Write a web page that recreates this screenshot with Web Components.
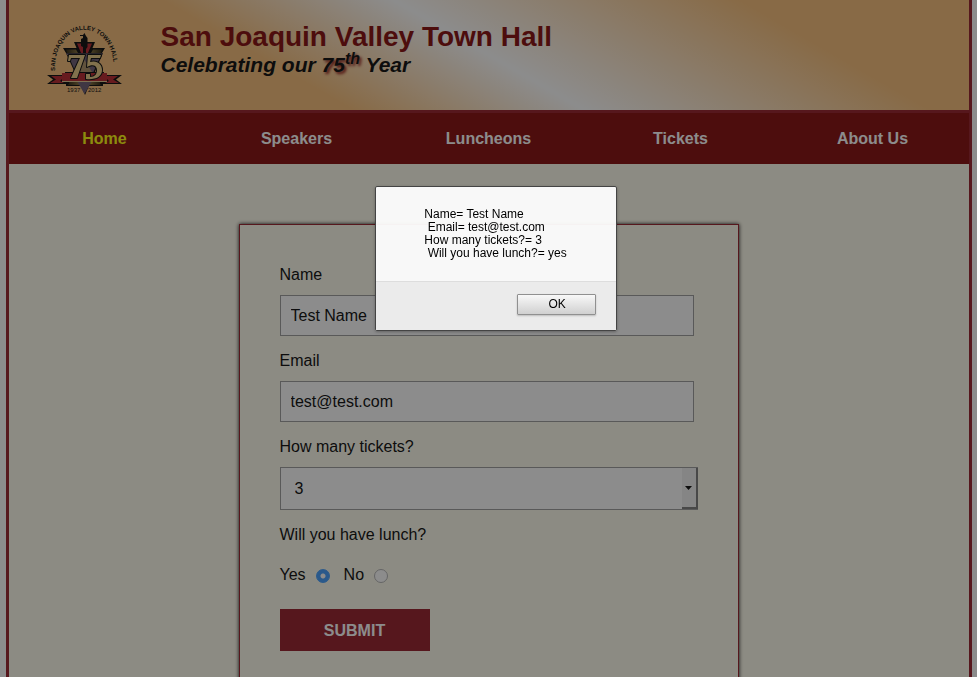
<!DOCTYPE html>
<html lang="en">
<head>
<meta charset="utf-8">
<title>San Joaquin Valley Town Hall</title>
<style>
  body { margin: 0; background: #fff; color: #000; font: 16px/20px "Liberation Sans", Arial, sans-serif; overflow: hidden; }
</style>
</head>
<body>
<town-page>
  <town-header slot="header"></town-header>
  <town-nav slot="nav"></town-nav>
  <ticket-form></ticket-form>
</town-page>
<alert-dialog>Name= Test Name
 Email= test@test.com
How many tickets?= 3
 Will you have lunch?= yes</alert-dialog>

<script>
function define(name, html) {
  const template = document.createElement('template');
  template.innerHTML = html;
  customElements.define(name, class extends HTMLElement {
    constructor() {
      super();
      this.attachShadow({ mode: 'open' }).append(template.content.cloneNode(true));
    }
    connectedCallback() {
      const root = this.shadowRoot;
      root.querySelectorAll('[data-text]').forEach(el => { el.textContent = this.getAttribute(el.dataset.text); });
      const input = root.querySelector('input.text');
      if (input) {
        input.type = this.getAttribute('type') || 'text';
        input.value = this.getAttribute('value') || '';
      }
      const ok = root.querySelector('button.ok');
      if (ok) ok.addEventListener('click', () => this.remove());
    }
  });
}

define('town-page', `
<style>
  :host { display: block; max-width: 960px; margin: 0 auto; border: solid #931420; border-width: 0 3px; background: #fffded; }
  main { padding-top: 60px; }
</style>
<slot name="header"></slot>
<slot name="nav"></slot>
<main><slot></slot></main>`);

define('town-logo', `
<style>
  :host { display: block; flex: none; width: 90px; height: 90px; }
  svg { display: block; width: 100%; height: 100%; }
  text { font-family: "Liberation Sans Narrow", "Liberation Sans", sans-serif; }
</style>
<svg viewBox="0 0 90 90" role="img" aria-label="San Joaquin Valley Town Hall 75th anniversary">
  <defs>
    <path id="arc" d="M15 56 C14 1 75 1 74 56"/>
    <linearGradient id="gold"><stop offset="0" stop-color="#241b06"/><stop offset=".5" stop-color="#a98c45"/><stop offset="1" stop-color="#241b06"/></linearGradient>
  </defs>
  <text font-size="6" font-weight="bold"><textPath href="#arc">SAN JOAQUIN VALLEY TOWN HALL</textPath></text>
  <path d="M34 27 H55 L44.500 52Z" fill="#000"/>
  <path d="M37 28.500 H52 L44.500 46Z" fill="#b51c24"/>
  <path d="M43 20 L44.500 18 L46 21 L47.500 23 V32 L46 34 V38 H43 V32 L41 31 V24 L43 23Z M40 20 H43 V21 H40Z" fill="#000"/>
  <path d="M23 33 H37 L42 42 H47 L52 33 H65 L62 38 H26Z" fill="#000"/>
  <path d="M26 34.500 H36 L38 38 H27Z M53 34.500 H62 L61 38 H51Z" fill="url(#gold)"/>
  <path d="M26 38 H63 L45 80Z" fill="#000"/>
  <path d="M28 40 H61 L44.500 77Z" fill="#67546d"/>
  <path d="M37 57 L44.500 45 L52 57Z" fill="#a88c60"/>
  <path d="M26 38.500 H63 L62 40 H27Z" fill="#67546d"/>
  <path d="M26 64 H63 V71 H26Z" fill="#000"/>
  <path d="M28 66 H61 V70 H28Z" fill="url(#gold)"/>
  <path d="M37 66 H52 L44.500 79Z" fill="#67546d"/>
  <path d="M7 60 H25 V57 H64 V60 H82 L76 64.500 L82 69 H60 V67 H29 V69 H7 L13 64.500Z" fill="#000"/>
  <path d="M11 61 H25 L20 66 L24 68 H10 L16 64.500Z M78 61 H64 L69 66 L65 68 H79 L73 64.500Z" fill="#b51c24"/>
  <path d="M22 58 H67 V66 H22Z" fill="#b51c24"/>
  <path d="M22 66.500 H67" stroke="#e2c78c" fill="none"/>
  <g fill="#e8c880" stroke="#000" stroke-width="2" paint-order="stroke" stroke-linejoin="round">
    <path d="M28 46 L29 40 H45 L37 63 H31 L40 43 H31 L30 46Z"/>
    <path d="M48 40 H61 L60 43 H51 L50 47 C57 45 62 49 62 55 C62 62 55 65 46 64 V59 H50 V62 C55 62 57 59 57 55 C57 50 52 49 47 52Z"/>
  </g>
  <text x="27" y="77" font-size="6">1937</text>
  <text x="48" y="77" font-size="6">2012</text>
</svg>`);

define('town-header', `
<style>
  :host { display: block; border-bottom: 3px solid #931420; background: linear-gradient(30deg, #f6bb73 0%, #f6bb73 30%, #fff 50%, #f6bb73 80%, #f6bb73 100%); }
  header { display: flex; gap: 31px; padding: 15px 31px 5px; }
  .titles { padding-top: 5px; }
  h1, h2 { margin: 0; }
  h1 { font-size: 28px; line-height: 33px; color: #800000; }
  h2 { font-size: 21px; line-height: 24px; font-style: italic; }
  .shadow { text-shadow: 2px 2px 3px #800000; }
  sup { font-size: 16px; line-height: 0; }
</style>
<header>
  <town-logo></town-logo>
  <div class="titles">
    <h1>San Joaquin Valley Town Hall</h1>
    <h2>Celebrating our <span class="shadow">75<sup>th</sup></span> Year</h2>
  </div>
</header>`);

define('town-nav', `
<style>
  :host { display: block; background: #800000; }
  ul { display: grid; grid-template-columns: repeat(5, 1fr); margin: 0; padding: 0; list-style: none; }
  a { display: block; padding: 16px 0; line-height: 19px; text-align: center; font-weight: bold; color: #fff; text-decoration: none; }
  a[aria-current] { color: #ff0; }
</style>
<nav><ul>
  <li><a href="#home" aria-current="page">Home</a></li>
  <li><a href="#speakers">Speakers</a></li>
  <li><a href="#luncheons">Luncheons</a></li>
  <li><a href="#tickets">Tickets</a></li>
  <li><a href="#about">About Us</a></li>
</ul></nav>`);

define('text-field', `
<style>
  :host { display: block; margin-bottom: 15px; }
  label { display: block; margin-bottom: 10px; }
  input { display: block; box-sizing: border-box; width: calc(100% - 4px); height: 41px; padding: 0 10px; border: 1px solid #999; border-radius: 0; background: #fff; font: inherit; color: inherit; outline: none; }
</style>
<label for="field" data-text="label"></label>
<input class="text" id="field">`);

define('ticket-select', `
<style>
  :host { display: block; margin-bottom: 15px; }
  label { display: block; margin-bottom: 10px; }
  .box { position: relative; }
  select { appearance: none; display: block; box-sizing: border-box; width: 100%; height: 43px; padding: 0 14px; border: 1px solid #999; border-radius: 0; background: #fff; font: inherit; color: inherit; }
  .arrow { position: absolute; top: 1px; right: 0; bottom: 1px; width: 16px; box-sizing: border-box; display: grid; place-items: center; background: #f0f0f0; border: solid #777; border-width: 0 2px 2px 0; pointer-events: none; }
  svg { display: block; width: 7px; height: 4px; }
</style>
<label for="count">How many tickets?</label>
<div class="box">
  <select id="count"><option>1</option><option>2</option><option selected>3</option><option>4</option></select>
  <span class="arrow"><svg viewBox="0 0 7 4"><path d="M0 0H7L3.500 4Z"/></svg></span>
</div>`);

define('lunch-choice', `
<style>
  :host { display: block; }
  fieldset { margin: 0; padding: 0; border: 0; min-width: 0; }
  legend { padding: 0; margin-bottom: 20px; }
  .row { display: flex; align-items: center; }
  input { appearance: none; box-sizing: border-box; width: 14px; height: 14px; margin: 2px 14px 0 10px; border: 1px solid #b0b0b0; border-radius: 50%; background: #fff; }
  input:checked { border-color: #3b99fc; background: radial-gradient(circle, #fff 0 2px, #3b99fc 3px); }
</style>
<fieldset>
  <legend>Will you have lunch?</legend>
  <div class="row">
    <label for="yes">Yes</label><input type="radio" id="yes" name="lunch" checked>
    <label for="no">No</label><input type="radio" id="no" name="lunch">
  </div>
</fieldset>`);

define('ticket-form', `
<style>
  :host { display: block; box-sizing: border-box; max-width: 500px; margin: 0 auto; padding: 40px; border: 1px solid #931420; box-shadow: 0 0 4px #000; }
  button { display: block; width: 150px; height: 42px; margin-top: 24px; padding: 2px 0 0; border: 0; background: #931420; color: #fff; font: inherit; font-weight: bold; }
</style>
<form onsubmit="return false">
  <text-field label="Name" value="Test Name"></text-field>
  <text-field label="Email" type="email" value="test@test.com"></text-field>
  <ticket-select></ticket-select>
  <lunch-choice></lunch-choice>
  <button type="submit">SUBMIT</button>
</form>`);

define('alert-dialog', `
<style>
  :host { position: fixed; inset: 0; display: flex; justify-content: center; align-items: flex-start; padding: 186px 0 0 15px; background: rgba(26, 26, 26, .5); font-size: 12px; line-height: 13px; }
  .dialog { border: 1px solid #444; border-radius: 2px; background: rgba(255, 255, 255, .95); box-shadow: 0 1px 3px rgba(0, 0, 0, .3); }
  .message { padding: 21px 49px 21px 48px; white-space: pre; }
  .actions { display: flex; justify-content: flex-end; padding: 12px 20px 15px; border-top: 1px solid #ddd; background: #ebebeb; }
  button { width: 79px; height: 21px; padding: 0 0 0 2px; border: 1px solid #909090; border-radius: 1px; background: linear-gradient(#f8f8f8, #d0d0d0); box-shadow: 0 1px 2px rgba(0, 0, 0, .2); font: inherit; color: #000; }
</style>
<div class="dialog" role="alertdialog" aria-modal="true" aria-labelledby="message">
  <div class="message" id="message"><slot></slot></div>
  <div class="actions"><button type="button" class="ok">OK</button></div>
</div>`);
</script>
</body>
</html>
